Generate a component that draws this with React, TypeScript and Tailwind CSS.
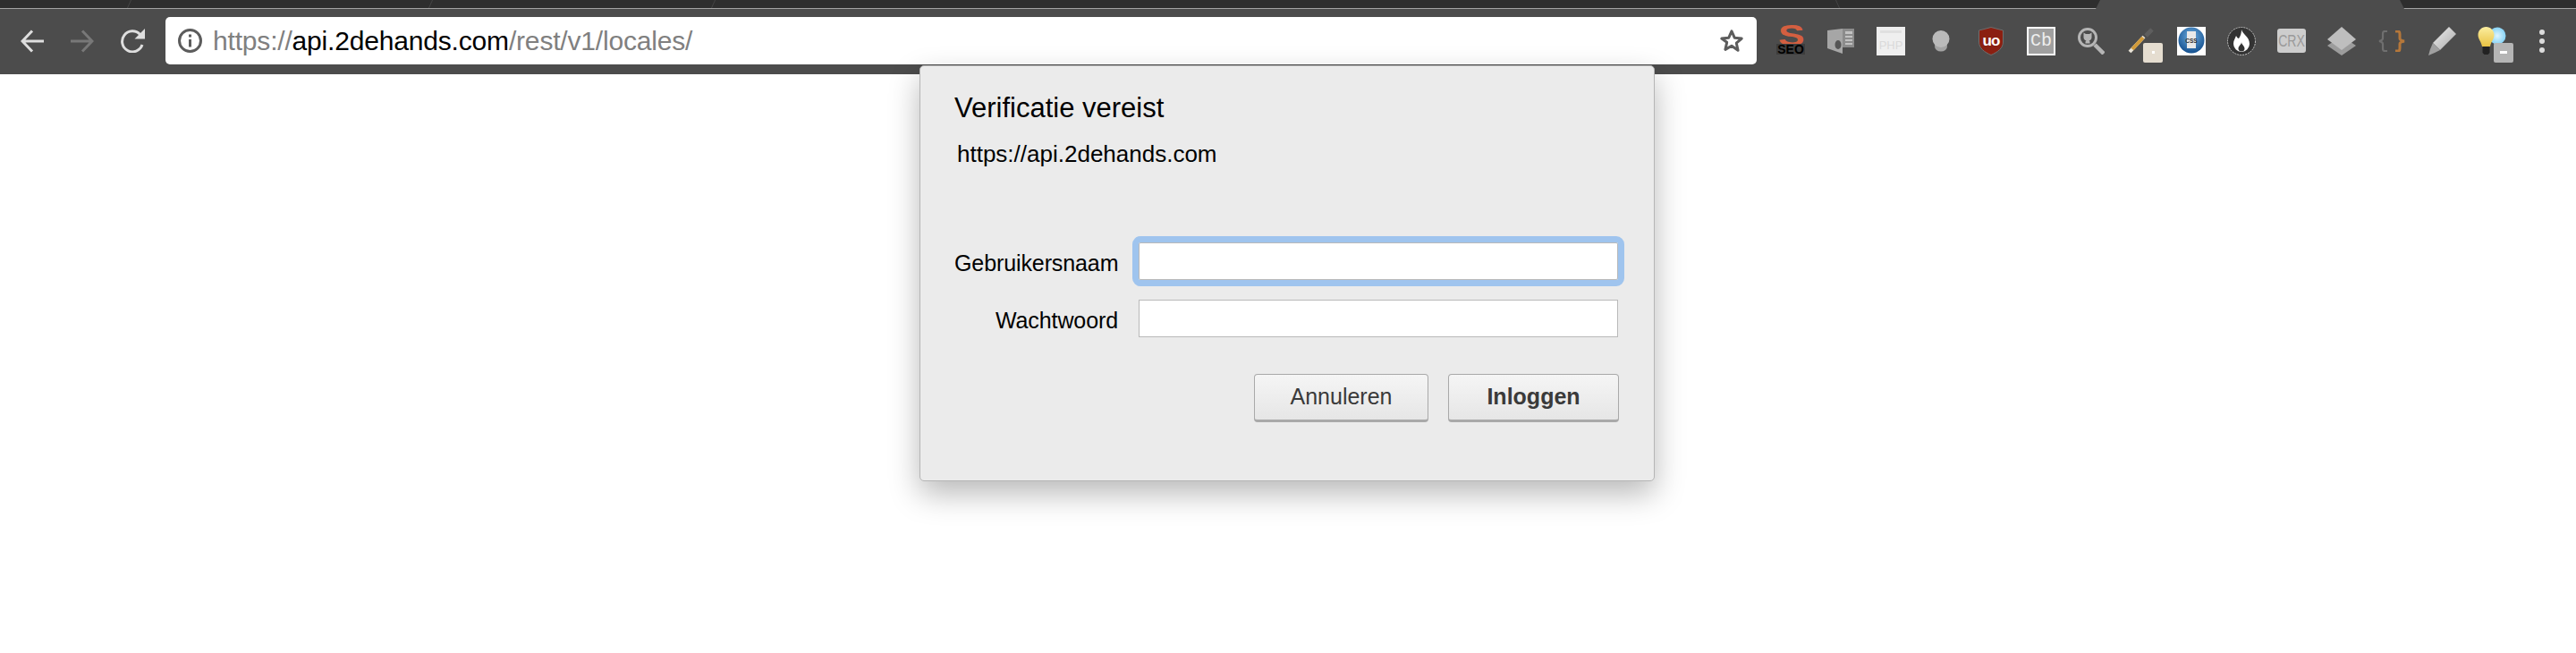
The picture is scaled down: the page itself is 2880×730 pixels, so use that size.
import type { ReactNode } from "react";

const uiFont = "font-['Liberation_Sans',Arial,sans-serif]";

function TabStrip() {
  return (
    <div className="flex h-[10px] border-b border-[#a3a3a3] bg-[#2e2e2e]">
      <div className="h-[9px] w-[145px] border-r border-[#454545] -skew-x-[24deg]" />
      <div className="h-[9px] w-[337px] border-r border-[#454545] -skew-x-[24deg]" />
      <div className="h-[9px] w-[316px] border-r border-[#454545] -skew-x-[24deg]" />
      <div className="h-[9px] w-[1257px] border-r border-[#454545] skew-x-[24deg]" />
      <div className="h-[9px] w-[288px]" />
      <div className="relative h-[10px] w-[345px] bg-[#4c4c4c] [clip-path:polygon(5px_0,calc(100%-5px)_0,100%_100%,0_100%)]" />
    </div>
  );
}

function NavIcons() {
  return (
    <div className="flex w-[185px] items-center gap-[30px] pl-[23px]">
      <svg width="26" height="26" viewBox="0 0 26 26" fill="none" stroke="#dedede" strokeWidth="3">
        <path d="M26 13H3M13 1.5 2 13l11 11.5" />
      </svg>
      <svg width="26" height="26" viewBox="0 0 26 26" fill="none" stroke="#787878" strokeWidth="3">
        <path d="M0 13h23M13 1.5 24 13 13 24.5" />
      </svg>
      <svg width="27" height="27" viewBox="0 0 27 27" fill="none">
        <path d="M24 18a11.5 11.5 0 1 1-2.5-11.5" stroke="#dedede" strokeWidth="3" />
        <path d="M27 0v11.5H15.5z" fill="#dedede" />
      </svg>
    </div>
  );
}

function AddressBar() {
  return (
    <div className="flex h-[53px] w-[1779px] items-center rounded-[5px] bg-white pl-[14px] pr-[14px]">
      <svg width="27" height="27" viewBox="0 0 27 27" fill="none" className="shrink-0">
        <circle cx="13.5" cy="13.5" r="12" stroke="#5c5c5c" strokeWidth="3" />
        <path d="M13.5 12v8.5M13.5 6.5v3" stroke="#5c5c5c" strokeWidth="3" />
      </svg>
      <div className={`ml-[12px] flex-1 pt-[1px] text-[30px] leading-none tracking-[-0.18px] text-[#808080] ${uiFont}`}>
        https://<span className="text-black">api.2dehands.com</span>/rest/v1/locales/
      </div>
      <svg width="28" height="28" viewBox="0 0 30 30" fill="none" stroke="#5c5c5c" strokeWidth="3.2">
        <path d="m15 3 3.6 8 8.4.8-6.3 5.6 1.9 8.6L15 20.6 7.4 25l1.9-8.6L3 11.8l8.4-.8z" strokeLinejoin="round" />
      </svg>
    </div>
  );
}

function Slot({ children }: { children: ReactNode }) {
  return <div className="relative flex h-[32px] w-[32px] shrink-0 items-center justify-center">{children}</div>;
}

function Badge({ color, dash }: { color: string; dash?: boolean }) {
  return (
    <div
      className="absolute left-[18px] top-[18px] flex h-[22px] w-[22px] items-center justify-center rounded-[2px]"
      style={{ background: color }}
    >
      <div className={dash ? "h-[3px] w-[8px] bg-white" : "h-[3px] w-[3px] bg-white"} />
    </div>
  );
}

function ExtensionIcons() {
  return (
    <div className="ml-[22px] flex items-center gap-[24px]">
      <Slot>
        <div className={`relative h-[32px] w-[32px] ${uiFont}`}>
          <div className="absolute left-[2px] top-[-3px] h-[24px] origin-left scale-x-[1.35] text-[33px] font-bold leading-[26px] text-[#d45f40]">
            S
          </div>
          <div className="absolute bottom-[1px] left-0 flex h-[12px] w-[32px] items-center justify-center bg-[#3d3d3d] text-[14px] font-bold leading-none text-black">
            SEO
          </div>
        </div>
      </Slot>
      <Slot>
        <svg width="32" height="30" viewBox="0 0 32 30">
          <path d="M1 3 18 1v28L1 23z" fill="#a6a6a6" />
          <path d="M18 1h13v21H18z" fill="#8c8c8c" />
          <path d="M21 4h8v3h-8zM21 9h8v2h-8zM21 13h8v2h-8zM21 17h8v2h-8z" fill="#c2c2c2" />
          <ellipse cx="13" cy="19" rx="3.5" ry="5" fill="#555" />
        </svg>
      </Slot>
      <Slot>
        <div className={`flex h-[32px] w-[32px] flex-col bg-[#efefef] ${uiFont}`}>
          <div className="mx-[4px] mt-[4px] h-[3px] bg-[#e0e0e0]" />
          <div className="mt-[7px] text-center text-[13px] leading-none text-[#dadada]">PHP</div>
        </div>
      </Slot>
      <Slot>
        <svg width="20" height="24" viewBox="0 0 20 24">
          <ellipse cx="10" cy="18" rx="7" ry="5.5" fill="#a3a3a3" />
          <circle cx="10" cy="9.5" r="9.5" fill="#bababa" />
        </svg>
      </Slot>
      <Slot>
        <svg width="28" height="32" viewBox="0 0 28 32">
          <path d="M14 .5 27.5 4v13c0 7-6.500 11.500-13.500 14.500C7 28.500.5 24 .5 17V4z" fill="#8a1f11" stroke="#6e6e6e" />
          <text x="14" y="21" textAnchor="middle" fontFamily="Liberation Sans" fontWeight="700" fontSize="17" letterSpacing="-1" fill="#fff">
            uo
          </text>
        </svg>
      </Slot>
      <Slot>
        <div className="flex h-[32px] w-[32px] items-center justify-center border-2 border-white bg-[#a0a0a0] font-['Liberation_Mono',monospace] text-[20px] leading-none text-[#eeeeee]">
          Cb
        </div>
      </Slot>
      <Slot>
        <svg width="30" height="30" viewBox="0 0 30 30" fill="none">
          <circle cx="11" cy="11" r="9.5" stroke="#b5b5b5" strokeWidth="3" />
          <path
            d="M6.500 5.500l2.500 1.500h4l2.500-1.500v5c0 2-1 3.500-3 4l1 1v2h-5v-2l1-1c-2-.5-3-2-3-4z"
            fill="#b5b5b5"
          />
          <path d="m19 19 10 10" stroke="#b5b5b5" strokeWidth="4.500" />
        </svg>
      </Slot>
      <Slot>
        <svg width="30" height="30" viewBox="0 0 30 30" fill="none" className="-translate-x-[1px]">
          <path d="M3 27 19 10" stroke="#e9e4d8" strokeWidth="4" />
          <path d="M6 24 18 11" stroke="#d29b3a" strokeWidth="4" />
          <path d="M21 9 28 2" stroke="#5e5e5e" strokeWidth="5" />
        </svg>
        <Badge color="#e5ddd0" />
      </Slot>
      <Slot>
        <svg width="32" height="32" viewBox="0 0 32 32">
          <defs>
            <radialGradient id="cssBall" cx="50%" cy="35%" r="65%">
              <stop offset="0%" stopColor="#6eaee0" />
              <stop offset="100%" stopColor="#14508f" />
            </radialGradient>
          </defs>
          <rect width="32" height="32" fill="#fff" />
          <circle cx="16" cy="15" r="14.500" fill="url(#cssBall)" />
          <path d="M11 5h10v19H11z" fill="#e9e9e9" />
          <text x="16" y="18" textAnchor="middle" fontFamily="Liberation Sans" fontWeight="700" fontSize="6.500" fill="#333">
            CSS
          </text>
        </svg>
      </Slot>
      <Slot>
        <svg width="32" height="32" viewBox="0 0 32 32">
          <circle cx="16" cy="16" r="15.500" fill="#333" stroke="#c4c4c4" strokeDasharray="2 1" />
          <path d="M16 3c1 5 9 8 9 16a9 9 0 0 1-18 0c0-4 2-6 3-9 1 2 2 3 3 3 2-3 3-6 3-10z" fill="#fff" />
          <path d="M16 17c0 3 3.500 4 3.500 7.500 0 2-1.500 3-3.500 3s-3.500-1-3.500-3c0-3.500 3.500-4.500 3.500-7.500z" fill="#333" />
        </svg>
      </Slot>
      <Slot>
        <div className={`flex h-[27px] w-[32px] items-center justify-center rounded-[3px] bg-[#cdcdcd] text-[#9a9a9a] ${uiFont}`}>
          <span className="scale-x-[0.78] text-[18px] leading-none">CRX</span>
        </div>
      </Slot>
      <Slot>
        <svg width="32" height="32" viewBox="0 0 32 32">
          <path d="M16 10 32 21 16 32 0 21z" fill="#9c9c9c" />
          <path d="M16 0 32 14 16 26 0 14z" fill="#bebebe" />
        </svg>
      </Slot>
      <Slot>
        <svg width="32" height="24" viewBox="0 0 32 24" fill="none" strokeWidth="2.200">
          <path d="M11 1H8Q6 1 6 4v5q0 2-4 3 4 1 4 3v5q0 3 2 3h3" stroke="#6f6f6f" />
          <path d="M20 1h3q2 0 2 3v5q0 2 5 3-5 1-5 3v5q0 3-2 3h-3" stroke="#b5773a" strokeWidth="3" />
        </svg>
      </Slot>
      <Slot>
        <svg width="32" height="32" viewBox="0 0 32 32">
          <defs>
            <linearGradient id="markerBody" x1="0" y1="0" x2="1" y2="1">
              <stop offset="0%" stopColor="#f0f0f0" />
              <stop offset="100%" stopColor="#a8a8a8" />
            </linearGradient>
          </defs>
          <path d="M24 0 32 8 14 26 6 18z" fill="url(#markerBody)" />
          <path d="M6 18 14 26 8 29 1 32 3 25z" fill="#a0a0a0" />
        </svg>
      </Slot>
      <Slot>
        <svg width="32" height="32" viewBox="0 0 32 32">
          <defs>
            <radialGradient id="blueBulb" cx="50%" cy="50%" r="55%">
              <stop offset="0%" stopColor="#dff5ff" />
              <stop offset="100%" stopColor="#7fd0f5" />
            </radialGradient>
            <linearGradient id="yellowBulb" x1="0" y1="0" x2="0" y2="1">
              <stop offset="0%" stopColor="#fbeea0" />
              <stop offset="100%" stopColor="#e9c243" />
            </linearGradient>
          </defs>
          <circle cx="22" cy="10" r="9.500" fill="url(#blueBulb)" />
          <path d="M9.500 0c5 0 9 4 9 9 0 5-3.500 7-4.500 13H5C4 16 .5 14 .5 9c0-5 4-9 9-9z" fill="url(#yellowBulb)" />
          <path d="M5.500 22h8v7l-2 2h-4l-2-2z" fill="#222" />
        </svg>
        <Badge color="#b5b5b5" dash />
      </Slot>
    </div>
  );
}

function MenuDots() {
  return (
    <div className="ml-[37px] flex flex-col gap-[4px]">
      <div className="h-[6px] w-[6px] rounded-full bg-[#dcdcdc]" />
      <div className="h-[6px] w-[6px] rounded-full bg-[#dcdcdc]" />
      <div className="h-[6px] w-[6px] rounded-full bg-[#dcdcdc]" />
    </div>
  );
}

function Field({ label, focused }: { label: string; focused?: boolean }) {
  return (
    <div className="flex items-center">
      <div className="w-[206px] pr-[23px] pt-[5px] text-right text-[25px] leading-none tracking-[-0.1px] text-black">{label}</div>
      <input
        type={label === "Wachtwoord" ? "password" : "text"}
        className={`h-[42px] w-[536px] border border-[#b9b9b9] bg-white ${
          focused ? "rounded-[2px] outline-[7px] outline-[#9fc4ee]" : ""
        }`}
      />
    </div>
  );
}

function AuthDialog() {
  return (
    <div
      className={`absolute left-[1028px] top-[73px] flex h-[465px] w-[822px] flex-col rounded-[5px] border border-[#b5b5b5] bg-[#ebebeb] pl-[38px] pr-[39px] shadow-[0_14px_34px_rgba(0,0,0,0.28)] ${uiFont}`}
    >
      <div className="mt-[30px] text-[31px] leading-[34px] text-black">Verificatie vereist</div>
      <div className="ml-[3px] mt-[19px] text-[26px] leading-[30px] text-black">https://api.2dehands.com</div>
      <div className="mt-[84px] flex flex-col gap-[22px]">
        <Field label="Gebruikersnaam" focused />
        <Field label="Wachtwoord" />
      </div>
      <div className="mt-[41px] flex justify-end gap-[22px]">
        <button className="h-[54px] w-[195px] rounded-[4px] border border-b-[3px] border-[#a9a9a9] bg-gradient-to-b from-[#f5f5f5] to-[#e6e6e6] text-[25px] text-[#3a3a3a]">
          Annuleren
        </button>
        <button className="h-[54px] w-[191px] rounded-[4px] border border-b-[3px] border-[#a9a9a9] bg-gradient-to-b from-[#f5f5f5] to-[#e6e6e6] text-[25px] font-bold text-[#3a3a3a]">
          Inloggen
        </button>
      </div>
    </div>
  );
}

export default function App() {
  return (
    <div className="relative h-[730px] w-[2880px] overflow-hidden bg-white">
      <TabStrip />
      <div className="flex h-[73px] items-center bg-[#4c4c4c] pb-[2px]">
        <NavIcons />
        <AddressBar />
        <ExtensionIcons />
        <MenuDots />
      </div>
      <AuthDialog />
    </div>
  );
}
